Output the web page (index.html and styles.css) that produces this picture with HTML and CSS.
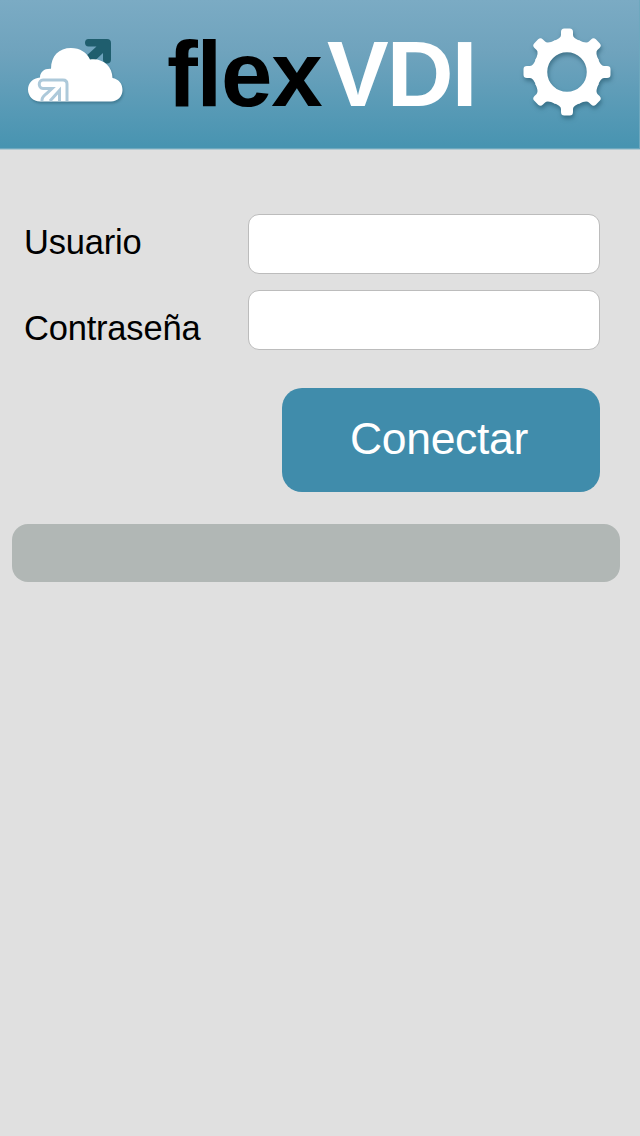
FILE: index.html
```
<!DOCTYPE html>
<html lang="es">
<head>
<meta charset="utf-8">
<title>flexVDI</title>
<link rel="stylesheet" href="styles.css">
</head>
<body>
<header class="header">
  <svg class="cloud" viewBox="0 0 120 90" aria-hidden="true">
    <path class="arrow-back" d="M73.500 14H92q4 0 4 4v16.500q0 4-4 4-4 0-4-4V28L77 38.500 70 32 81.500 21.500H73.500q-3.500 0-3.500-3.700 0-3.800 3.500-3.800z"/>
    <path class="cloud-shape" d="M25 76.500C18 76.500 13 71 13 64.500 13 58 18 53 25 52.500 25 47 29 43.500 36 43.800 36 31 44 23 56 23 65 23 72 27.500 75 34.500 87 32.500 97.500 41 97.500 53 103.500 54 107.500 58.500 107.500 65 107.500 71.500 102.500 76.500 96 76.500Z"/>
    <path class="arrow-front" d="M27 76C26.500 72.500 28.500 71 31 69L37 63.500H28C23 63.500 23 55 28 55H48Q52 55 52 59V76M35 76L44.500 65.500V76"/>
  </svg>
  <h1 class="title"><span class="flex-word">flex</span><span class="vdi-word">VDI</span></h1>
  <svg class="gear" viewBox="-50 -50 100 100" aria-hidden="true">
    <defs>
      <path id="tooth" d="M-14-30.800Q-6-33.500-6-37V-40Q-6-43.500-2.700-43.500H2.700Q6-43.500 6-40V-37Q6-33.500 14-30.800V-24H-14Z"/>
    </defs>
    <circle class="ring" r="26.500"/>
    <g class="teeth">
      <use href="#tooth"/>
      <use href="#tooth" transform="rotate(45)"/>
      <use href="#tooth" transform="rotate(90)"/>
      <use href="#tooth" transform="rotate(135)"/>
      <use href="#tooth" transform="rotate(180)"/>
      <use href="#tooth" transform="rotate(225)"/>
      <use href="#tooth" transform="rotate(270)"/>
      <use href="#tooth" transform="rotate(315)"/>
    </g>
  </svg>
</header>
<main class="content">
  <form class="login">
    <label class="label" for="user">Usuario</label>
    <input class="field" id="user" type="text">
    <label class="label label-password" for="password">Contraseña</label>
    <input class="field" id="password" type="password">
    <button class="connect" type="button">Conectar</button>
  </form>
  <div class="status"></div>
</main>
</body>
</html>
```
FILE: styles.css
```
* { box-sizing: border-box; }
body {
  margin: 0;
  min-height: 1136px;
  background: #e0e0e0;
  color: #000;
  font-family: "Liberation Sans", Arial, sans-serif;
}
.header {
  display: flex;
  align-items: flex-start;
  height: 150px;
  padding-left: 15px;
  border-bottom: 1px solid #b3cad3;
  background: linear-gradient(#7babc4, #6fa3bd 35%, #4894b1 98%);
  box-shadow: inset -1px -1px #6ea8be;
}
.cloud {
  flex: none;
  width: 120px;
  height: 90px;
  margin-top: 25px;
}
.arrow-back { fill: #1f5e6e; }
.cloud-shape {
  fill: #fff;
  filter: drop-shadow(1px 2px 1px rgba(30, 80, 100, .4));
}
.arrow-front {
  fill: none;
  stroke: #adc9da;
  stroke-width: 3;
}
.title {
  display: flex;
  width: 340px;
  height: 100px;
  margin: 21px 0 0 32px;
  font-size: 92.500px;
  line-height: 107px;
  font-weight: bold;
}
.flex-word {
  width: 160px;
  letter-spacing: -1.200px;
}
.vdi-word {
  color: #fff;
  letter-spacing: -1.900px;
}
.gear {
  flex: none;
  width: 100px;
  height: 100px;
  margin: 22px 0 0 10px;
  filter: drop-shadow(1px 3px 2px rgba(20, 70, 90, .5));
}
.ring {
  fill: none;
  stroke: #fff;
  stroke-width: 13.500;
}
.teeth { fill: #fff; }
.content { padding: 64px 20px 0 12px; }
.login {
  display: grid;
  grid-template-columns: 224px 352px;
  grid-template-rows: 60px 60px;
  row-gap: 16px;
  padding-left: 12px;
}
.label {
  font-size: 34.500px;
  line-height: 56px;
  letter-spacing: -.2px;
}
.label-password { padding-top: 10px; }
.field {
  width: 352px;
  height: 60px;
  padding: 0 14px;
  border: 1px solid #bcbcbc;
  border-radius: 11px;
  background: #fff;
  font: 34px "Liberation Sans", Arial, sans-serif;
}
.connect {
  grid-column: 2;
  justify-self: end;
  width: 318px;
  height: 104px;
  margin-top: 22px;
  padding: 0 4px 2px 0;
  border: 0;
  border-radius: 20px;
  background: #408cab;
  color: #fff;
  font: 44.500px "Liberation Sans", Arial, sans-serif;
  letter-spacing: -.3px;
}
.status {
  height: 58px;
  margin-top: 32px;
  border-radius: 16px;
  background: #b1b7b5;
}
```
